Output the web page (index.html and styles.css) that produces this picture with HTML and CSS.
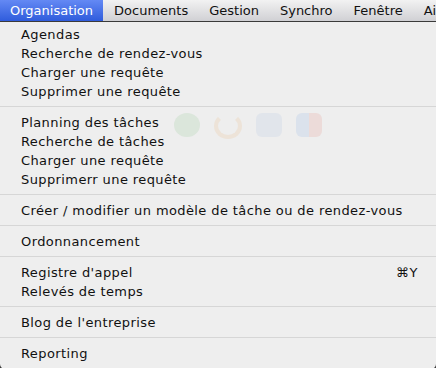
FILE: index.html
```html
<!DOCTYPE html>
<html lang="fr">
  <head>
    <meta charset="UTF-8" />
    <meta name="viewport" content="width=device-width, initial-scale=1.0" />
    <title>Organisation</title>
    <link rel="stylesheet" href="styles.css">
  </head>
  <body>
    <div class="menubar">
      <span class="title active">Organisation</span>
      <span class="title">Documents</span>
      <span class="title">Gestion</span>
      <span class="title">Synchro</span>
      <span class="title">Fenêtre</span>
      <span class="title">Aide</span>
    </div>

    <div class="menu">
      <div class="ghosts">
        <span class="ghost green"></span>
        <span class="ghost orange"></span>
        <span class="ghost blue"></span>
        <span class="ghost multi"></span>
      </div>

      <div class="item">Agendas</div>
      <div class="item">Recherche de rendez-vous</div>
      <div class="item">Charger une requête</div>
      <div class="item">Supprimer une requête</div>
      <div class="sep"></div>
      <div class="item">Planning des tâches</div>
      <div class="item">Recherche de tâches</div>
      <div class="item">Charger une requête</div>
      <div class="item">Supprimerr une requête</div>
      <div class="sep"></div>
      <div class="item">Créer / modifier un modèle de tâche ou de rendez-vous</div>
      <div class="sep"></div>
      <div class="item">Ordonnancement</div>
      <div class="sep"></div>
      <div class="item">Registre d'appel <span class="key">⌘Y</span></div>
      <div class="item">Relevés de temps</div>
      <div class="sep"></div>
      <div class="item">Blog de l'entreprise</div>
      <div class="sep"></div>
      <div class="item">Reporting</div>
    </div>
  </body>
</html>
```

FILE: styles.css
```css
body {
  margin: 0;
  width: 436px;
  height: 368px;
  overflow: hidden;
  background: #3a3a3a;
  font-family: "DejaVu Sans", "Noto Sans", sans-serif;
  font-size: 13px;
  color: #111;
}

/* top bar */

.menubar {
  display: flex;
  height: 21px;
  background: linear-gradient(#f2f2f2, #d0d0d4);
  border-bottom: 1px solid #3a3a3a;
  white-space: nowrap;
  overflow: hidden;
}

.menubar .title {
  padding: 0 10px;
  margin-right: 1px;
  line-height: 21px;
}

.menubar .title.active {
  background: linear-gradient(#6489f4, #2f5cdc);
  color: #fff;
}

/* dropdown */

.menu {
  position: relative;
  background: rgba(244, 244, 244, 0.97);
  padding-top: 3px;
  height: 344px;
  border-radius: 0 0 5px 5px;
  letter-spacing: 0.4px;
}

.item {
  position: relative;
  display: flex;
  justify-content: space-between;
  height: 19px;
  line-height: 19px;
  padding: 0 18px 0 21px;
}

.key {
  letter-spacing: 0.6px;
}

.sep {
  height: 1px;
  margin: 5px 0 6px;
  background: #d6d6d6;
}

.ghosts {
  position: absolute;
  left: 174px;
  top: 91px;
  display: flex;
  gap: 14px;
  opacity: 0.1;
}

.ghost {
  width: 26px;
  height: 24px;
  border-radius: 6px;
}

.ghost.green {
  background: #3ca33c;
  border-radius: 50%;
}

.ghost.orange {
  border: 4px solid #e88a20;
  border-top-color: transparent;
  border-radius: 50%;
  width: 20px;
  height: 18px;
}

.ghost.blue {
  background: #7ca0d8;
}

.ghost.multi {
  background: linear-gradient(90deg, #3a7de0 50%, #e04030 50%);
}
```
